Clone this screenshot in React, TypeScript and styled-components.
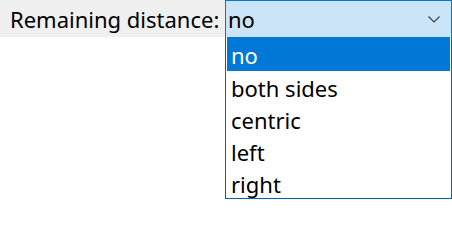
import { createGlobalStyle, styled } from "styled-components"

const options = ["no", "both sides", "centric", "left", "right"]

const GlobalStyle = createGlobalStyle`
  html, body {
    margin: 0;
    padding: 0;
    background: #ffffff;
  }
  body {
    font-family: "Noto Sans", "Open Sans", sans-serif;
    color: #000000;
  }
`

export default function App() {
  return (
    <>
      <GlobalStyle />
      <Row>
        <Label>Remaining distance:</Label>
        <Combo>
          <SelectBox>
            <Value>no</Value>
            <svg width="12" height="7" viewBox="0 0 12 7">
              <path d="M0.5 0.5 L6 6 L11.5 0.5" fill="none" stroke="#3c3c3c" strokeWidth="1.1" />
            </svg>
          </SelectBox>
          <List>
            {options.map((o, i) => (
              <Item key={o} $selected={i === 0}>
                {o}
              </Item>
            ))}
          </List>
        </Combo>
      </Row>
    </>
  )
}

const Row = styled.div`
  display: flex;
  align-items: flex-start;
  width: 452px;
  height: 200px;
  overflow: hidden;
`
const Label = styled.div`
  width: 225px;
  height: 37px;
  box-sizing: border-box;
  padding-left: 10px;
  display: flex;
  align-items: center;
  background-color: #f0f0f0;
  font-size: 22px;
  white-space: nowrap;
`
const Combo = styled.div`
  flex: 1;
  display: flex;
  flex-direction: column;
`
const SelectBox = styled.div`
  height: 37px;
  box-sizing: border-box;
  display: flex;
  align-items: center;
  justify-content: space-between;
  padding: 0 11px 0 2px;
  background-color: #cce4f7;
  border: 1px solid #0078d7;
  border-bottom: none;
`
const Value = styled.span`
  font-size: 22px;
`
const List = styled.ul`
  margin: 0;
  padding: 0 1px;
  list-style: none;
  height: 162px;
  box-sizing: border-box;
  border: 1px solid #0063b1;
  border-top: none;
`
const Item = styled.li<{ $selected: boolean }>`
  height: 32px;
  display: flex;
  align-items: center;
  padding: 2px 0 0 4px;
  box-sizing: border-box;
  font-size: 22px;
  background-color: ${(p) => (p.$selected ? "#0078d7" : "transparent")};
  color: ${(p) => (p.$selected ? "#ffffff" : "#000000")};
  &:first-child {
    height: 34px;
  }
`
